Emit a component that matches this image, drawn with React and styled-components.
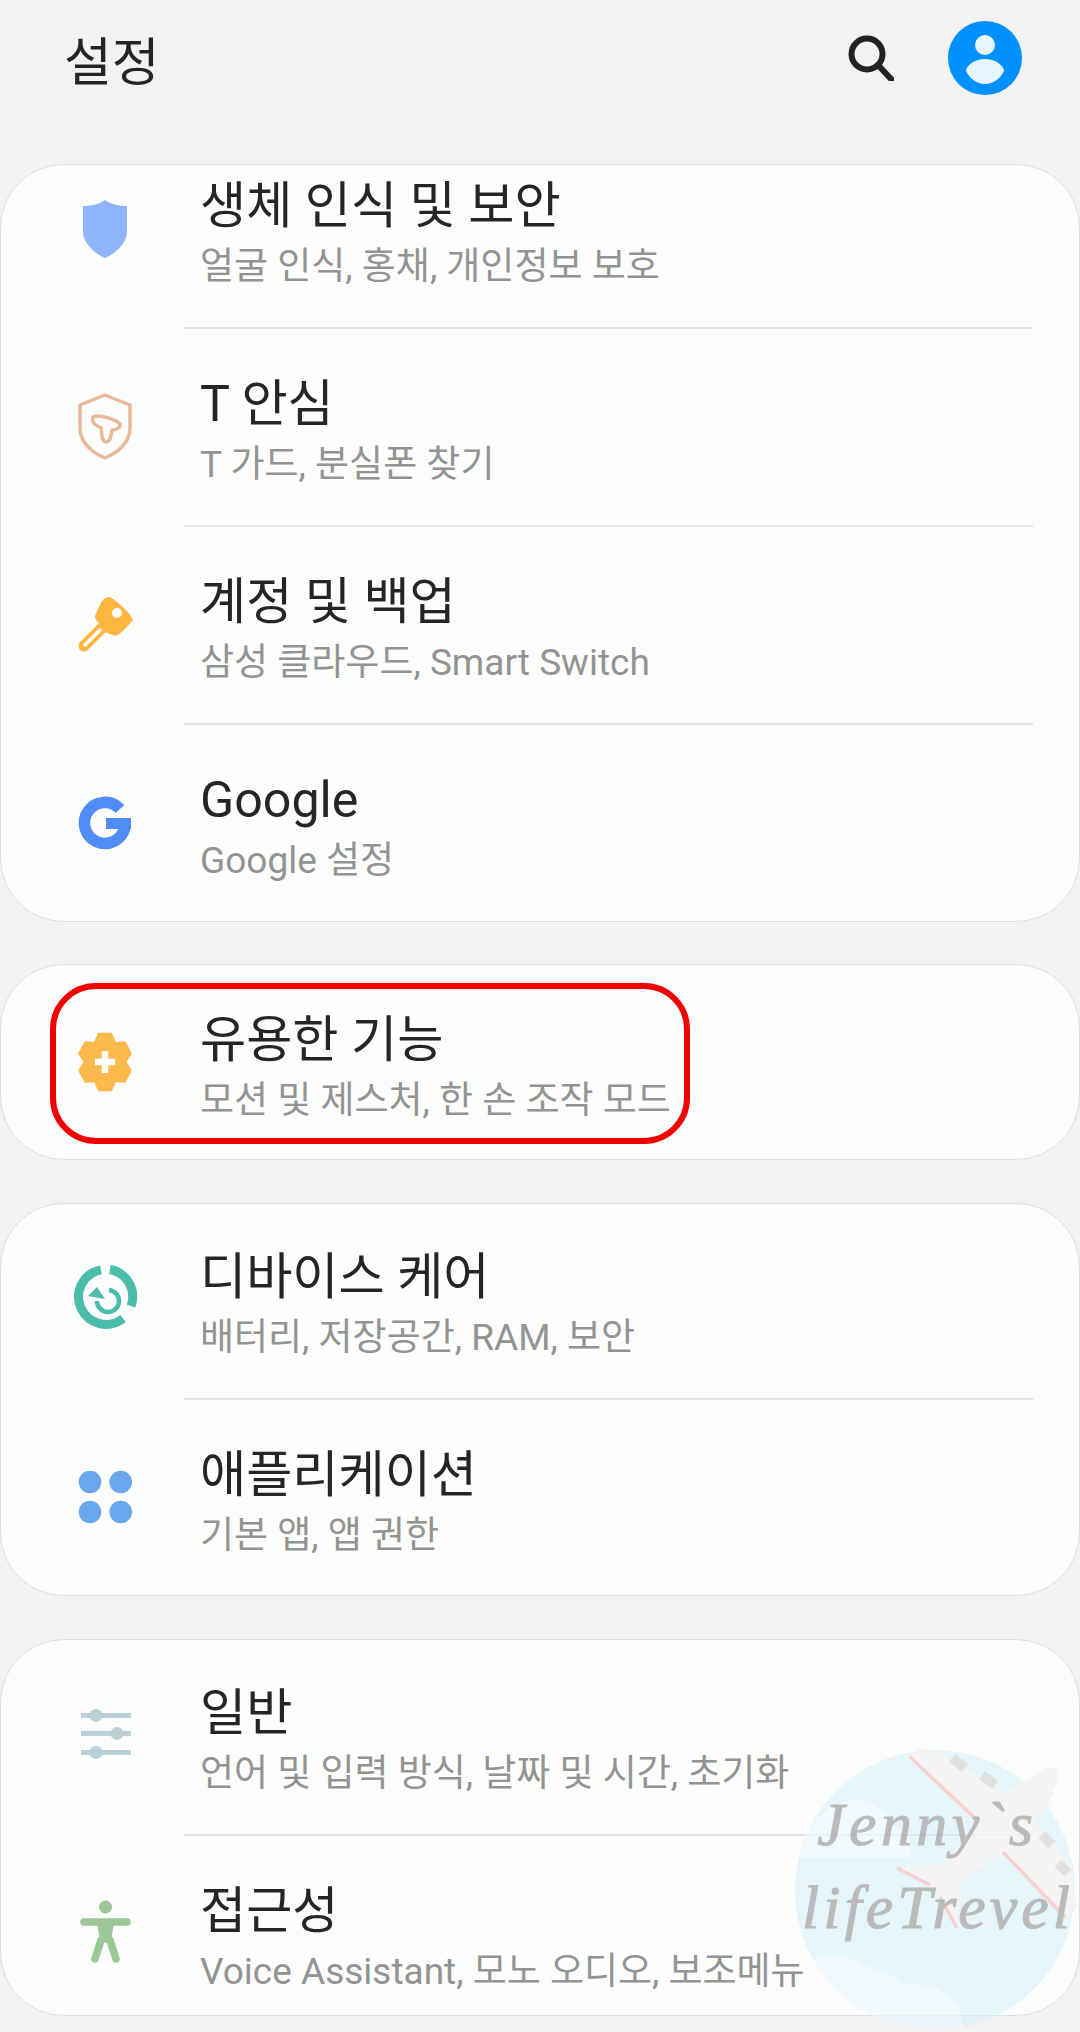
import styled, { createGlobalStyle } from "styled-components";

const GlobalStyle = createGlobalStyle`
  html, body {
    margin: 0;
    padding: 0;
    background: #f2f2f2;
  }
`;

const gearPath = () => {
  const pts = [];
  for (let i = 0; i < 6; i++) {
    const a = -90 + i * 60;
    [
      [a - 13, 29],
      [a + 13, 29],
      [a + 30, 22],
    ].forEach(([deg, r]) => {
      const rad = (deg * Math.PI) / 180;
      pts.push(`${(40 + 0.93 * r * Math.cos(rad)).toFixed(1)} ${(40 + r * Math.sin(rad)).toFixed(1)}`);
    });
  }
  return `M${pts.join("L")}Z`;
};

const ShieldIcon = () => (
  <svg width="80" height="80" viewBox="0 0 80 80">
    <path
      d="M18 18Q32 18 40 12Q48 18 62 18V44C62 55 50 66 40 70C30 66 18 55 18 44Z"
      fill="#8eb4fb"
    />
  </svg>
);

const TGuardIcon = () => (
  <svg width="80" height="80" viewBox="0 0 80 80" fill="none" stroke="#ecb89a" strokeWidth="3.5">
    <path d="M40 9L65 19V42C65 57 52 67 40 72C28 67 15 57 15 42V19Z" strokeLinejoin="round" />
    <path
      d="M28 31C34 28 50 33 55 38C56 42 50 44 47 44C46 50 46 55 41 56C36 55 37 48 36 42C32 40 26 37 28 31Z"
      strokeLinejoin="round"
    />
  </svg>
);

const KeyIcon = () => (
  <svg width="80" height="80" viewBox="0 0 80 80">
    <path
      d="M45 13C39 13 36 18 34 23L30 32C30 36 33 38 36 40L40 48L50 52C55 51 61 44 68 36C66 30 56 20 45 13Z"
      fill="#fdb740"
    />
    <path d="M38 43L19 62" stroke="#fdb740" strokeWidth="11" strokeLinecap="round" />
    <path d="M35 46L20 61" stroke="#fff" strokeWidth="3.5" strokeLinecap="round" />
    <circle cx="52" cy="29" r="5" fill="#fff" />
  </svg>
);

const GoogleIcon = () => (
  <svg width="80" height="80" viewBox="0 0 80 80" fill="none">
    <path d="M55 27A20.5 20.5 0 1 0 60 45" stroke="#4f8cf5" strokeWidth="11.5" />
    <rect x="41" y="36" width="25" height="11" fill="#4f8cf5" />
  </svg>
);

const GearIcon = () => (
  <svg width="80" height="80" viewBox="0 0 80 80">
    <path d={gearPath()} fill="#fdb94c" stroke="#fdb94c" strokeWidth="2" strokeLinejoin="round" />
    <path d="M40 29V51M30 40H50" stroke="#fff" strokeWidth="6.5" />
  </svg>
);

const CareIcon = () => (
  <svg width="80" height="80" viewBox="0 0 80 80" fill="none" stroke="#4cbcab">
    <path d="M45 10.5A27.5 27.5 0 0 1 66 47" strokeWidth="9" />
    <path d="M36 10.8A27.5 27.5 0 1 0 58 59.5" strokeWidth="9" />
    <path d="M44 31A11 11 0 1 1 32 42" strokeWidth="4.5" />
    <path d="M23 37L32 28L40 40Z" fill="#4cbcab" stroke="none" />
  </svg>
);

const AppsIcon = () => (
  <svg width="80" height="80" viewBox="0 0 80 80" fill="#6ba7ef">
    <circle cx="25" cy="25" r="11.3" />
    <circle cx="55.7" cy="25" r="11.3" />
    <circle cx="25" cy="55" r="11.3" />
    <circle cx="55.7" cy="55" r="11.3" />
  </svg>
);

const SlidersIcon = () => (
  <svg width="80" height="80" viewBox="0 0 80 80" fill="#b9d0d8">
    <rect x="16" y="18" width="50" height="5" />
    <rect x="16" y="36" width="50" height="5" />
    <rect x="16" y="55" width="50" height="5" />
    <circle cx="31" cy="20.5" r="6.5" />
    <circle cx="52" cy="38.5" r="6.5" />
    <circle cx="31" cy="57.5" r="6.5" />
  </svg>
);

const BodyIcon = () => (
  <svg width="80" height="80" viewBox="0 0 80 80" fill="#9ac795">
    <circle cx="40.5" cy="14" r="6.5" />
    <path d="M19 29H62" stroke="#9ac795" strokeWidth="7.5" strokeLinecap="round" />
    <path d="M32 30H49L46 48L40.5 50L35 48Z" />
    <path d="M36 47L30 66M45 47L51 66" stroke="#9ac795" strokeWidth="7.5" strokeLinecap="round" />
  </svg>
);

const SearchIcon = () => (
  <svg width="46" height="46" viewBox="0 0 46 46" fill="none" stroke="#222" strokeWidth="6">
    <circle cx="19" cy="19" r="15.5" />
    <path d="M30 30L44 45" strokeLinecap="round" />
  </svg>
);

const AvatarIcon = () => (
  <svg width="74" height="74" viewBox="0 0 74 74">
    <circle cx="37" cy="37" r="37" fill="#0091ff" />
    <circle cx="37" cy="24" r="10" fill="#e8f5ff" />
    <path d="M37 38C48 38 56 45 56 50C52 58 45 63 37 63C29 63 22 58 18 50C18 45 26 38 37 38Z" fill="#e8f5ff" />
  </svg>
);

const Watermark = () => (
  <WatermarkBox>
    <svg width="300" height="300" viewBox="0 0 300 300">
      <defs>
        <clipPath id="globe">
          <circle cx="145" cy="150" r="140" />
        </clipPath>
      </defs>
      <circle cx="145" cy="150" r="140" fill="#cdeefb" fillOpacity="0.6" />
      <g clipPath="url(#globe)" fill="#f2fbfe" fillOpacity="0.75">
        <path d="M10 105Q30 60 70 60Q95 65 100 85Q125 90 120 118H10Z" />
        <path d="M10 225Q45 205 70 225Q95 230 115 245Q150 240 170 270L175 300H10Z" />
      </g>
      <g fill="#f3f3f3">
        <path d="M120 17L130 8L150 13L210 50L253 90L280 123L287 167L277 177L213 112L183 80Z" />
        <path d="M267 30L257 27L217 52L153 123L107 128L140 147L150 157L167 187L170 143L213 112L257 67L268 40Z" />
      </g>
      <g fill="none" stroke="#f7c3c3" strokeWidth="3.5">
        <path d="M120 17L187 80M213 112L275 177" />
        <path d="M107 128L140 145M150 157L167 188" />
      </g>
      <path d="M162 18L175 28M192 35L205 45M252 95L262 105M268 123L278 133" stroke="#d9d9d9" strokeWidth="10" fill="none" />
      <WatermarkText x="27" y="105" textLength="216">Jenny`s</WatermarkText>
      <WatermarkText x="12" y="188" textLength="268">lifeTrevel</WatermarkText>
    </svg>
  </WatermarkBox>
);

const rows1 = [
  { icon: <ShieldIcon />, title: "생체 인식 및 보안", sub: "얼굴 인식, 홍채, 개인정보 보호" },
  { icon: <TGuardIcon />, title: "T 안심", sub: "T 가드, 분실폰 찾기" },
  { icon: <KeyIcon />, title: "계정 및 백업", sub: "삼성 클라우드, Smart Switch" },
  { icon: <GoogleIcon />, title: "Google", sub: "Google 설정" },
];

const rows3 = [
  { icon: <CareIcon />, title: "디바이스 케어", sub: "배터리, 저장공간, RAM, 보안" },
  { icon: <AppsIcon />, title: "애플리케이션", sub: "기본 앱, 앱 권한" },
];

const rows4 = [
  { icon: <SlidersIcon />, title: "일반", sub: "언어 및 입력 방식, 날짜 및 시간, 초기화" },
  { icon: <BodyIcon />, title: "접근성", sub: "Voice Assistant, 모노 오디오, 보조메뉴" },
];

const SettingRows = ({ rows }) =>
  rows.map((row, i) => (
    <div key={row.title}>
      {i > 0 && <Divider />}
      <Row>
        <IconBox>{row.icon}</IconBox>
        <RowText>
          <RowTitle>{row.title}</RowTitle>
          <RowSub>{row.sub}</RowSub>
        </RowText>
      </Row>
    </div>
  ));

function App() {
  return (
    <Page>
      <GlobalStyle />
      <Header>
        <HeaderTitle>설정</HeaderTitle>
        <HeaderActions>
          <SearchIcon />
          <AvatarIcon />
        </HeaderActions>
      </Header>
      <Card $height={758} $after={42}>
        <ScrolledList $offset={-34}>
          <SettingRows rows={rows1} />
        </ScrolledList>
      </Card>
      <Card $height={196} $after={43}>
        <SettingRows rows={[{ icon: <GearIcon />, title: "유용한 기능", sub: "모션 및 제스처, 한 손 조작 모드" }]} />
        <Highlight />
      </Card>
      <Card $height={393} $after={43}>
        <ScrolledList $offset={-2}>
          <SettingRows rows={rows3} />
        </ScrolledList>
      </Card>
      <Card $height={377} $after={0}>
        <ScrolledList $offset={-2}>
          <SettingRows rows={rows4} />
        </ScrolledList>
      </Card>
      <Watermark />
    </Page>
  );
}

const Page = styled.div`
  position: relative;
  width: 1080px;
  height: 2032px;
  overflow: hidden;
  background: #f2f2f2;
  font-family: Roboto, "Noto Sans CJK KR", sans-serif;
  display: flex;
  flex-direction: column;
`;

const Header = styled.header`
  flex: none;
  height: 116px;
  margin-bottom: 48px;
  padding: 0 58px 0 64px;
  display: flex;
  align-items: center;
  justify-content: space-between;
`;

const HeaderTitle = styled.h1`
  margin: 0;
  font-size: 52px;
  font-weight: 400;
  color: #252525;
`;

const HeaderActions = styled.div`
  display: flex;
  align-items: center;
  gap: 54px;
`;

const Card = styled.section`
  position: relative;
  box-sizing: border-box;
  flex: none;
  height: ${(p) => p.$height}px;
  margin-bottom: ${(p) => p.$after}px;
  background: #fdfdfd;
  border: 1px solid #dedede;
  border-radius: 64px;
  overflow: hidden;
`;

const ScrolledList = styled.div`
  margin-top: ${(p) => p.$offset}px;
`;

const Row = styled.div`
  height: 196px;
  display: flex;
  align-items: flex-start;
`;

const IconBox = styled.div`
  width: 80px;
  height: 80px;
  margin: 57px 55px 0 64px;
  flex: none;
`;

const RowText = styled.div`
  padding-top: 45px;
`;

const RowTitle = styled.div`
  font-size: 50.2px;
  line-height: 60px;
  color: #252525;
`;

const RowSub = styled.div`
  font-size: 37px;
  line-height: 61px;
  color: #939393;
`;

const Divider = styled.div`
  height: 2px;
  margin: 0 46px 0 183px;
  background: #e4e4e4;
`;

const Highlight = styled.div`
  position: absolute;
  left: 49px;
  top: 18px;
  width: 640px;
  height: 161px;
  box-sizing: border-box;
  border: 6px solid #f00000;
  border-radius: 46px;
`;

const WatermarkBox = styled.div`
  position: absolute;
  left: 790px;
  top: 1740px;
  width: 300px;
  height: 300px;
  pointer-events: none;
  opacity: 0.8;
`;

const WatermarkText = styled.text`
  font-family: "Liberation Serif", serif;
  font-style: italic;
  font-size: 62px;
  fill: #aaa;
  stroke: #aaa;
  stroke-width: 1px;
`;

export default App;
